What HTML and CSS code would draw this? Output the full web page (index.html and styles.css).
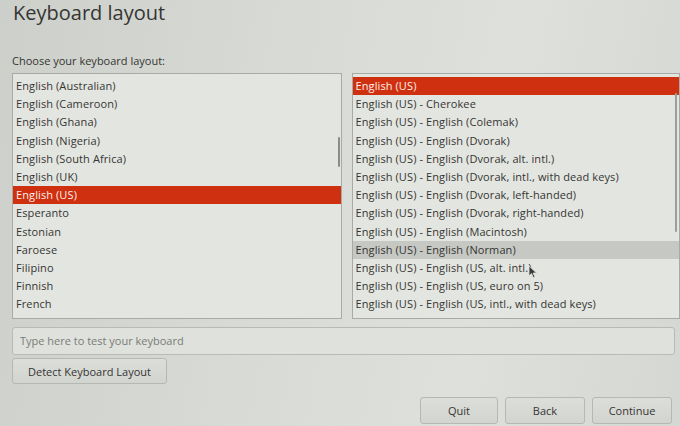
FILE: index.html
```html
<!DOCTYPE html>
<html>
<head>
<meta charset="utf-8">
<link rel="stylesheet" href="styles.css">
</head>
<body>
<div class="page">
  <h1 class="title">Keyboard layout</h1>
  <div class="label">Choose your keyboard layout:</div>
  <div class="lists">
    <div class="list left">
      <div class="rows">
        <div class="row">English (Australian)</div>
        <div class="row">English (Cameroon)</div>
        <div class="row">English (Ghana)</div>
        <div class="row">English (Nigeria)</div>
        <div class="row">English (South Africa)</div>
        <div class="row">English (UK)</div>
        <div class="row sel">English (US)</div>
        <div class="row">Esperanto</div>
        <div class="row">Estonian</div>
        <div class="row">Faroese</div>
        <div class="row">Filipino</div>
        <div class="row">Finnish</div>
        <div class="row">French</div>
      </div>
      <div class="thumb left-thumb"></div>
    </div>
    <div class="list right">
      <div class="rows">
        <div class="row sel">English (US)</div>
        <div class="row">English (US) - Cherokee</div>
        <div class="row">English (US) - English (Colemak)</div>
        <div class="row">English (US) - English (Dvorak)</div>
        <div class="row">English (US) - English (Dvorak, alt. intl.)</div>
        <div class="row">English (US) - English (Dvorak, intl., with dead keys)</div>
        <div class="row">English (US) - English (Dvorak, left-handed)</div>
        <div class="row">English (US) - English (Dvorak, right-handed)</div>
        <div class="row">English (US) - English (Macintosh)</div>
        <div class="row hover">English (US) - English (Norman)</div>
        <div class="row">English (US) - English (US, alt. intl.)</div>
        <div class="row">English (US) - English (US, euro on 5)</div>
        <div class="row">English (US) - English (US, intl., with dead keys)</div>
        <div class="row">English (US) - English (Workman)</div>
      </div>
      <div class="thumb right-thumb"></div>
      <svg class="cursor" width="10" height="14" viewBox="0 0 10 14"><path d="M1 1 L1 11 L3.5 8.6 L5.4 12.8 L7 12.1 L5.1 8 L8.6 8 Z" fill="#3a3a38" stroke="#e3e5e0" stroke-width="0.8"/></svg>
    </div>
  </div>
  <div class="test-input">Type here to test your keyboard</div>
  <div class="detect-row"><div class="btn detect">Detect Keyboard Layout</div></div>
  <div class="nav">
    <div class="btn nav-btn quit">Quit</div>
    <div class="btn nav-btn back">Back</div>
    <div class="btn nav-btn cont">Continue</div>
  </div>
</div>
</body>
</html>
```
FILE: styles.css
```css
html, body {
  margin: 0;
  padding: 0;
}
body {
  width: 680px;
  height: 426px;
  overflow: hidden;
  font-family: "Open Sans", "Noto Sans", sans-serif;
  color: #353533;
  background: linear-gradient(100deg, #cdd0ca 0%, #d8dad5 40%, #dee0db 70%, #d5d7d2 100%);
}
.page {
  display: flex;
  flex-direction: column;
  height: 426px;
}
.title {
  margin: 0;
  padding: 0 0 0 13px;
  height: 46px;
  line-height: 25px;
  font-size: 20px;
  font-weight: 400;
  color: #353533;
}
.label {
  font-size: 11px;
  line-height: 14px;
  height: 27px;
  padding-left: 12px;
  padding-top: 8px;
  box-sizing: border-box;
  color: #353533;
}
.lists {
  display: flex;
  gap: 10px;
  padding-left: 12px;
}
.list {
  position: relative;
  height: 246px;
  box-sizing: border-box;
  border: 1px solid #a8aaa5;
  background: #e3e5e0;
  overflow: hidden;
  padding-top: 3px;
}
.list.left { width: 331px; }
.list.right { width: 330px; }
.rows {
  display: flex;
  flex-direction: column;
}
.row {
  flex: none;
  height: 18.2px;
  line-height: 18px;
  font-size: 11px;
  letter-spacing: 0.1px;
  padding-left: 3px;
  white-space: nowrap;
  color: #353533;
}
.row.sel {
  background: #cf3010;
  color: #fbf0ea;
}
.row.hover {
  background: #c6c8c3;
}
.thumb {
  position: absolute;
  width: 2px;
  background: #8a8c88;
  border-radius: 1px;
}
.left-thumb { left: 325px; top: 63px; height: 30px; }
.right-thumb { left: 322px; top: 19px; height: 139px; background: #9c9e9a; }
.cursor {
  position: absolute;
  left: 175px;
  top: 191px;
}
.test-input {
  margin: 8px 5px 0 12px;
  height: 28px;
  box-sizing: border-box;
  border: 1px solid #b8bab5;
  border-radius: 3px;
  background: #dfe1dc;
  font-size: 11px;
  line-height: 26px;
  padding-left: 7px;
  color: #7a7c78;
}
.detect-row {
  display: flex;
  padding: 3px 0 0 12px;
}
.btn {
  box-sizing: border-box;
  border: 1px solid #b6b8b3;
  border-radius: 3px;
  background: linear-gradient(#dcded9, #d2d4cf);
  font-size: 11px;
  display: flex;
  align-items: center;
  justify-content: center;
  color: #353533;
}
.detect {
  width: 155px;
  height: 26px;
}
.nav {
  display: flex;
  justify-content: flex-end;
  gap: 7px;
  padding: 13px 8px 0 0;
}
.nav-btn {
  height: 27px;
}
.quit { width: 78px; }
.back { width: 80px; }
.cont { width: 80px; }
```
